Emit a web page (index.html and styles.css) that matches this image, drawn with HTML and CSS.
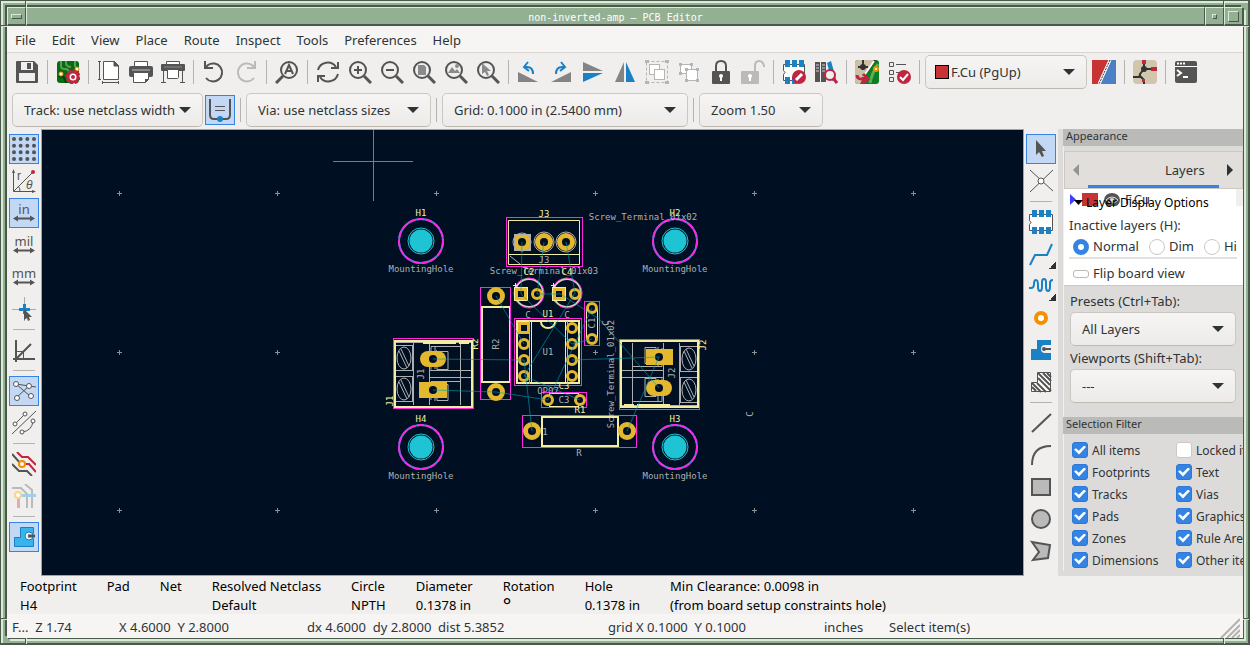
FILE: index.html
```html
<!DOCTYPE html>
<html lang="en">
<head>
  <meta charset="UTF-8" />
  <meta name="viewport" content="width=device-width, initial-scale=1.0"/>
  <title>non-inverted-amp – PCB Editor</title>
  <link rel="stylesheet" href="styles.css">
</head>
<body>
  <div class="frame">
    <i class="notch top left"></i><i class="notch top right"></i>
    <i class="notch bottom left"></i><i class="notch bottom right"></i>
    <i class="notch side top left"></i><i class="notch side top right"></i>
    <i class="notch side bottom left"></i><i class="notch side bottom right"></i>

    <div class="client">
      <header class="titlebar">
        <button class="wm-btn" aria-label="Window menu"><i class="wm-bar"></i></button>
        <h1 class="title">non-inverted-amp – PCB Editor</h1>
        <button class="wm-btn" aria-label="Minimize"><i class="wm-dot"></i></button>
        <button class="wm-btn" aria-label="Maximize"><i class="wm-box"></i></button>
      </header>

      <nav class="menubar">
        <button>File</button>
        <button>Edit</button>
        <button>View</button>
        <button>Place</button>
        <button>Route</button>
        <button>Inspect</button>
        <button>Tools</button>
        <button>Preferences</button>
        <button>Help</button>
      </nav>

      <div class="toolbar">
        <button class="tool" aria-label="Save"><svg viewBox="0 0 24 24"><path fill="#545454" d="M1 2a1 1 0 0 1 1-1h17l4 4v17a1 1 0 0 1-1 1H2a1 1 0 0 1-1-1z"/><path fill="#f0efee" d="M6 2h12v8H6zM4 13h16v8H4z"/><path fill="#545454" d="M12 3h4v6h-4z"/></svg></button>
        <i class="sep"></i>
        <button class="tool" aria-label="Board setup"><svg viewBox="0 0 24 24"><rect x="1" y="1" width="22" height="22" rx="3" fill="#0a6b12"/><path d="M5 1v5q0 3 4 3t4 4v3M10 1v3q1 3 5 3M19 1v6" stroke="#57a155" stroke-width="2" fill="none"/><path d="M3 17q5-3 7 6" stroke="#063f0a" stroke-width="2" fill="none"/><circle cx="5" cy="14" r="2" fill="#fff" stroke="#f29100"/><circle cx="21" cy="9" r="2" fill="#fff" stroke="#f29100"/><circle cx="17" cy="17" r="5" fill="#fff" stroke="#bf2641" stroke-width="3"/><circle cx="17" cy="17" r="6.500" fill="none" stroke="#bf2641" stroke-width="2" stroke-dasharray="3 2"/><circle cx="17" cy="17" r="2" fill="#bf2641"/></svg></button>
        <i class="sep"></i>
        <button class="tool" aria-label="Page settings"><svg viewBox="0 0 24 24" fill="none" stroke="#545454"><path d="M6.500 1.500h11l4 4v14h-15z" fill="#fff"/><path d="M17 1v5h5" fill="#545454"/><path d="M2.500 1v18M1 1.500h3M1 19.500h3M6 22.500h15M5.500 21v3M21.500 21v3"/></svg></button>
        <button class="tool" aria-label="Print"><svg viewBox="0 0 24 24"><path d="M5.500 7V1.500h13V7" fill="#fff" stroke="#545454"/><rect y="6" width="24" height="11" rx="2" fill="#545454"/><path fill="#8a8a8a" d="M3 9h18v2H3z"/><path d="M4.500 12.500h15v7l-3 3h-12z" fill="#fff" stroke="#545454"/><path fill="#545454" d="M16 19h4l-4 4z"/></svg></button>
        <button class="tool" aria-label="Plot"><svg viewBox="0 0 24 24"><path d="M5.500 5V1.500h13V5" fill="#fff" stroke="#545454"/><rect y="4" width="24" height="7" rx="1" fill="#545454"/><path d="M2.500 10v12M21.500 10v12M0 22.500h5M19 22.500h5" stroke="#545454"/><path d="M6.500 9.500h11v8l-1 1h-10z" fill="#fff" stroke="#545454"/><path d="M3 7h18" stroke="#8a8a8a"/></svg></button>
        <i class="sep"></i>
        <button class="tool" aria-label="Undo"><svg viewBox="0 0 24 24" fill="none" stroke="#545454" stroke-width="2"><path d="M3 1v7h8M3 8l3-3a9 9 0 1 1-2 13"/></svg></button>
        <button class="tool" aria-label="Redo"><svg viewBox="0 0 24 24" fill="none" stroke="#bababa" stroke-width="2"><path d="M21 1v7h-8M21 8l-3-3a9 9 0 1 0 2 13"/></svg></button>
        <i class="sep"></i>
        <button class="tool" aria-label="Find"><svg viewBox="0 0 24 24" fill="none" stroke="#545454" stroke-width="2"><circle cx="14" cy="10" r="8"/><path d="M8 16l-7 7" stroke-width="3"/><path d="M10 14l4-9 4 9M12 11h5"/></svg></button>
        <i class="sep"></i>
        <button class="tool" aria-label="Refresh"><svg viewBox="0 0 24 24" fill="none" stroke="#545454" stroke-width="2"><path d="M2 10a10 10 0 0 1 18-3M22 2v6h-7M22 14a10 10 0 0 1-18 3M2 22v-6h7"/></svg></button>
        <button class="tool" aria-label="Zoom in"><svg viewBox="0 0 24 24" fill="none" stroke="#545454" stroke-width="2"><circle cx="10" cy="10" r="8"/><path d="M16 16l7 7" stroke-width="3"/><path d="M10 6v8M6 10h8"/></svg></button>
        <button class="tool" aria-label="Zoom out"><svg viewBox="0 0 24 24" fill="none" stroke="#545454" stroke-width="2"><circle cx="10" cy="10" r="8"/><path d="M16 16l7 7" stroke-width="3"/><path d="M6 10h8"/></svg></button>
        <button class="tool" aria-label="Zoom to page"><svg viewBox="0 0 24 24" fill="none" stroke="#545454" stroke-width="2"><circle cx="10" cy="10" r="8"/><path d="M16 16l7 7" stroke-width="3"/><path fill="#8a8a8a" stroke="none" d="M6 5h6l2 2v8H6z"/></svg></button>
        <button class="tool" aria-label="Zoom to objects"><svg viewBox="0 0 24 24" fill="none" stroke="#545454" stroke-width="2"><circle cx="10" cy="10" r="8"/><path d="M16 16l7 7" stroke-width="3"/><path fill="#8a8a8a" stroke="none" d="M4 13l4-6 3 4 2-2 3 4z"/><circle cx="13" cy="6" r="1" fill="#8a8a8a" stroke="#8a8a8a"/></svg></button>
        <button class="tool" aria-label="Zoom to selection"><svg viewBox="0 0 24 24" fill="none" stroke="#545454" stroke-width="2"><circle cx="10" cy="10" r="8"/><path d="M16 16l7 7" stroke-width="3"/><path fill="#8a8a8a" stroke="none" d="M6 3v11l3-2 2 4 2-1-2-4h4z"/></svg></button>
        <i class="sep"></i>
        <button class="tool" aria-label="Rotate counterclockwise"><svg viewBox="0 0 24 24"><path fill="#848484" d="M1 12v10h20z"/><path d="M7 7h3q6 0 6 7M11 2L7 7l5 4" fill="none" stroke="#1a81c4" stroke-width="2"/></svg></button>
        <button class="tool" aria-label="Rotate clockwise"><svg viewBox="0 0 24 24"><path fill="#848484" d="M22 12v10H2z"/><path d="M16 7h-3q-6 0-6 7M12 2l4 5-5 4" fill="none" stroke="#1a81c4" stroke-width="2"/></svg></button>
        <button class="tool" aria-label="Mirror vertically"><svg viewBox="0 0 24 24"><path fill="#848484" d="M2 2v9h20z"/><path fill="#1a81c4" d="M2 22v-9h20z"/></svg></button>
        <button class="tool" aria-label="Mirror horizontally"><svg viewBox="0 0 24 24"><path fill="#848484" d="M2 22h9V2z"/><path fill="#1a81c4" d="M22 22h-9V2z"/></svg></button>
        <button class="tool" aria-label="Group"><svg viewBox="0 0 24 24" stroke="#b5b5b5" fill="none"><rect x="1.500" y="1.500" width="21" height="21" stroke-dasharray="3 2"/><path fill="#b5b5b5" stroke="none" d="M0 0h4v3H0zM20 0h4v3h-4zM0 21h4v3H0zM20 21h4v3h-4z"/><rect x="4.500" y="4.500" width="10" height="10" fill="#fff"/><rect x="9.500" y="9.500" width="10" height="10" fill="#fff"/></svg></button>
        <button class="tool" aria-label="Ungroup"><svg viewBox="0 0 24 24" stroke="#b5b5b5" fill="#fff"><rect x="3.500" y="4.500" width="11" height="9"/><rect x="9.500" y="9.500" width="11" height="11"/><path fill="#b5b5b5" stroke="none" d="M2 3h3v3H2zM13 3h3v3h-3zM2 12h3v3H2zM8 8h3v3H8zM19 8h3v3h-3zM8 19h3v3H8zM19 19h3v3h-3z"/></svg></button>
        <button class="tool" aria-label="Lock"><svg viewBox="0 0 24 24"><rect x="3" y="11" width="18" height="13" rx="1" fill="#545454"/><path d="M7 11V6q0-5 5-5t5 5v5" fill="none" stroke="#545454" stroke-width="2"/><circle cx="12" cy="16" r="2" fill="#fff"/><path fill="#fff" d="M11 16h2v5h-2z"/></svg></button>
        <button class="tool" aria-label="Unlock"><svg viewBox="0 0 24 24"><rect y="11" width="18" height="13" rx="1" fill="#bababa"/><path d="M14 11V6q0-5 4-5t5 5v1" fill="none" stroke="#bababa" stroke-width="2"/><circle cx="9" cy="16" r="2" fill="#fff"/><path fill="#fff" d="M8 16h2v5H8z"/></svg></button>
        <i class="sep"></i>
        <button class="tool" aria-label="Footprint editor"><svg viewBox="0 0 24 24"><path d="M1.500 4.500h21v16h-21v-6q3-2 0-4z" fill="#fff" stroke="#545454"/><path fill="#1a81c4" d="M3 0h5v7H3zM10 0h5v7h-5zM17 0h5v7h-5zM3 17h5v7H3zM10 17h5v7h-5z"/><circle cx="17" cy="17" r="7" fill="#bf2641"/><path d="M14 20l6-6" stroke="#fff" stroke-width="3"/></svg></button>
        <button class="tool" aria-label="Footprint library browser"><svg viewBox="0 0 24 24"><path fill="#545454" d="M1 2h5v20H1zM7 2h5v20H7z"/><path fill="#1a81c4" d="M13 3l4-2 5 18-4 2z"/><path d="M2 5h3M2 8h3M2 11h3M8 5h3M8 8h3M8 11h3" stroke="#d0d0d0"/><circle cx="16" cy="15" r="5" fill="#f0efee" stroke="#bf2641" stroke-width="2"/><path d="M19 18l4 5" stroke="#bf2641" stroke-width="3"/></svg></button>
        <i class="sep"></i>
        <button class="tool" aria-label="Update PCB"><svg viewBox="0 0 24 24"><rect width="24" height="24" rx="3" fill="#0b7d22"/><path fill="#cdc0a6" d="M3 0h16L5 24H3a3 3 0 0 1-3-3V3a3 3 0 0 1 3-3z"/><path d="M8 0v10M3 7h10M20 0L7 19" stroke="#333" stroke-width="2"/><path d="M19 1L8 17" stroke="#fff" stroke-width="2"/><circle cx="8" cy="7" r="3" fill="#333"/><path d="M23 4q-6 9-8 19" stroke="#59ae58" stroke-width="3" fill="none"/><circle cx="21" cy="9" r="2" fill="#fff" stroke="#f29100" stroke-width="2"/><path d="M2 15q0 5 8 4M8 14l5 5-6 4" stroke="#bf2641" stroke-width="3" fill="none"/></svg></button>
        <button class="tool" aria-label="Design rules checker"><svg viewBox="0 0 24 24"><path d="M2.500 2.500h4v4h-4zM2.500 10.500h4v4h-4zM2.500 17.500h4v4h-4zM9 4.500h10M9 12.500h6" fill="none" stroke="#545454"/><circle cx="17" cy="17" r="7" fill="#bf2641"/><path d="M13 17l3 3 5-6" fill="none" stroke="#fff" stroke-width="2"/></svg></button>
        <i class="sep"></i>
        <label class="combo layer"><i class="swatch"></i><select aria-label="Active layer"><option>F.Cu (PgUp)</option></select><i class="arrow"></i></label>
        <button class="tool" aria-label="Layer pair"><svg viewBox="0 0 24 24"><path fill="#c83434" d="M0 0h18L6 24H0z"/><path fill="#4d7fc4" d="M18 0h6v24H6z"/><path d="M18 0L7 24" stroke="#fff" stroke-width="3"/><path d="M18 0L7 24" stroke="#333" stroke-dasharray="2 1"/></svg></button>
        <i class="sep"></i>
        <button class="tool" aria-label="Switch to schematic"><svg viewBox="0 0 24 24"><rect width="24" height="24" rx="4" fill="#d1c5ac"/><path d="M11 3v6l-4 5v4M11 9h7M0 17h6M6 15l5 5v4" stroke="#333" stroke-width="2" fill="none"/><circle cx="11" cy="9" r="3" fill="#333"/><path fill="#bf2641" d="M9 0h4v4H9zM18 7h6v4h-6zM9 19h3v3H9z"/></svg></button>
        <i class="sep"></i>
        <button class="tool" aria-label="Scripting console"><svg viewBox="0 0 24 24"><rect x="1" y="1" width="22" height="22" rx="2" fill="#545454"/><path d="M1 6.500h22" stroke="#fff"/><path d="M3 3.500h8" stroke="#fff" stroke-width="2" stroke-dasharray="2 1"/><path d="M3 10l4 3-4 3M9 17h5" stroke="#fff" stroke-width="2" fill="none"/></svg></button>
      </div>

      <div class="toolbar options">
        <label class="combo track"><select aria-label="Track width"><option>Track: use netclass width</option></select><i class="arrow"></i></label>
        <button class="tool active" aria-label="Auto track width"><svg viewBox="0 0 24 24" fill="none" stroke="#545454" stroke-width="2"><path d="M2 1v16q0 4 4 4h12q4 0 4-4V1"/><path d="M7 8.500h10M7 12.500h10" stroke-width="1"/><circle cx="12" cy="21" r="3" fill="#1a81c4" stroke="none"/></svg></button>
        <i class="sep"></i>
        <label class="combo via"><select aria-label="Via size"><option>Via: use netclass sizes</option></select><i class="arrow"></i></label>
        <i class="sep"></i>
        <label class="combo grid-size"><select aria-label="Grid"><option>Grid: 0.1000 in (2.5400 mm)</option></select><i class="arrow"></i></label>
        <i class="sep"></i>
        <label class="combo zoom"><select aria-label="Zoom"><option>Zoom 1.50</option></select><i class="arrow"></i></label>
      </div>

      <main class="workspace">
        <div class="toolbar vertical">
          <button class="tool active" aria-label="Show grid"><svg viewBox="0 0 24 24" stroke="#545454" stroke-width="4" stroke-linecap="round" stroke-dasharray="0 6.667"><path d="M2 2h21M2 8.667h21M2 15.333h21M2 22h21"/></svg></button>
          <button class="tool" aria-label="Polar coordinates"><svg viewBox="0 0 24 24" fill="none" stroke="#545454"><path d="M1.500 2v20.500H22M2 22L21 3M8 22q0-3-2-5"/><path fill="#545454" stroke="none" d="M0 4l1.500-4L3 4zM20 21l4 1.500-4 1.500z"/><circle cx="21" cy="3" r="2" fill="#bf2641" stroke="none"/><text x="5" y="11" class="ico-text">r</text><text x="14" y="20" class="ico-text slant">θ</text></svg></button>
          <button class="tool active" aria-label="Inches"><svg viewBox="0 0 24 24"><text x="12" y="13" class="unit">in</text><path d="M5 17.500h14" stroke="#545454" stroke-width="2"/><path fill="#545454" d="M1 17.500l5-3v6zM23 17.500l-5-3v6z"/></svg></button>
          <button class="tool" aria-label="Mils"><svg viewBox="0 0 24 24"><text x="12" y="13" class="unit">mil</text><path d="M5 17.500h14" stroke="#545454" stroke-width="2"/><path fill="#545454" d="M1 17.500l5-3v6zM23 17.500l-5-3v6z"/></svg></button>
          <button class="tool" aria-label="Millimeters"><svg viewBox="0 0 24 24"><text x="12" y="13" class="unit">mm</text><path d="M5 17.500h14" stroke="#545454" stroke-width="2"/><path fill="#545454" d="M1 17.500l5-3v6zM23 17.500l-5-3v6z"/></svg></button>
          <button class="tool" aria-label="Full-window crosshair"><svg viewBox="0 0 24 24"><path d="M12.500 0v24M0 12.500h24" stroke="#aaa"/><path d="M12.500 7v10M7 12.500h11" stroke="#1a81c4" stroke-width="3"/><path fill="#545454" d="M12 12v11l3-2 1 3 2-1-1-3h3z"/></svg></button>
          <i class="sep"></i>
          <button class="tool" aria-label="Constrain to H, V, 45°"><svg viewBox="0 0 24 24" fill="none" stroke="#545454" stroke-width="2"><path d="M4 2v22M1 21h22M4 21L19 6"/><path d="M4 13.500h7.500V21" stroke-width="1"/></svg></button>
          <i class="sep"></i>
          <button class="tool active" aria-label="Show ratsnest"><svg viewBox="0 0 24 24" fill="#fff" stroke="#545454"><path d="M4 5l13 2 7 1M4 5l14 12M5 18L17 7"/><circle cx="4" cy="5" r="2.500"/><circle cx="17" cy="7" r="2.500"/><circle cx="5" cy="19" r="2.500"/><circle cx="19" cy="17" r="2.500"/></svg></button>
          <button class="tool" aria-label="Curved ratsnest"><svg viewBox="0 0 24 24" fill="none" stroke="#545454"><path d="M0 23L24 0M3 13L13 3M10 21q10-1 11-11"/><g fill="#fff"><circle cx="3" cy="13" r="2"/><circle cx="13" cy="3" r="2"/><circle cx="10" cy="21" r="2"/><circle cx="21" cy="10" r="2"/></g></svg></button>
          <i class="sep"></i>
          <button class="tool" aria-label="High contrast"><svg viewBox="0 0 24 24" fill="none" stroke-width="2"><path d="M0 2l9 10M0 12l7 7h8l5 5" stroke="#545454"/><path d="M5 0l5 5h6l8 8M14 12h3l7 8" stroke="#bf2641"/><circle cx="10" cy="12" r="3" fill="#fff" stroke="#f29100"/></svg></button>
          <button class="tool" aria-label="Net highlighting"><svg viewBox="0 0 24 24" fill="none" stroke-width="2"><path d="M0 4h9l6 6v14M13 0l7 6v18" stroke="#bababa"/><path d="M9 11.500h15" stroke="#a3cde8" stroke-width="3"/><path d="M6.500 13v11" stroke="#e8a8b3" stroke-width="3"/><circle cx="6" cy="11" r="3" fill="#fff" stroke="#fbd38f"/></svg></button>
          <i class="sep"></i>
          <button class="tool active" aria-label="Show filled zones"><svg viewBox="0 0 24 24"><path d="M8.500 2.500h13v6h-4v5h4v8h-19v-9h6z" fill="#39b4ea" stroke="#1a81c4"/><circle cx="17" cy="11" r="4" fill="#e8f2fb" stroke="#1a81c4"/><path d="M16 11h7" stroke="#545454" stroke-width="3"/></svg></button>
        </div>

        <div class="canvas">
          <svg class="board" role="img" aria-label="Board">
            <defs>
              <g id="cross"><path d="M-2 .5h5M.5-2v5" stroke="#8b9096"/></g>
              <g id="hole">
                <circle r="22" stroke="#4d7fe0" fill="none" stroke-width="2"/>
                <circle r="22" stroke="#ff26e2" fill="none" stroke-width="2" stroke-dasharray="7 2"/>
                <circle r="13" stroke="#1ec3d4" fill="none"/>
                <circle r="11.500" fill="#1ec3d4"/>
              </g>
              <g id="pad"><circle r="4.500" fill="#001022" stroke="#e3b72e" stroke-width="3"/></g>
              <g id="sqpad"><rect x="-4.500" y="-4.500" width="9" height="9" fill="#001022" stroke="#e3b72e" stroke-width="3"/></g>
              <g id="bigpad"><circle r="6.500" fill="#001022" stroke="#e3b72e" stroke-width="5"/></g>
              <g id="screw" class="fab"><rect x="-8.500" y="-12.500" width="17" height="25"/><ellipse rx="7" ry="11"/><path d="M-3-9L5 8M-5-7L3 10"/></g>
              <g id="terminal">
                <g class="fab"><path d="M3 5.500h77M20.500 5v63M36.500 5v63M67.500 5v63M36 33.500h44M36 40.500h44"/><path d="M38 32.500V9.500h29M44 32.500v-18h11v18zM38 63V44.500h29M44 63.500v-16h11v16zM42 9v23M42 44v20"/></g>
                <use href="#screw" x="11" y="21"/><use href="#screw" x="11" y="52"/>
                <path class="silk bold" d="M2 4h77v66H2zM31 4v2h31V4M66 6h10"/>
                <rect class="court" x=".5" y="1.500" width="80" height="70"/>
              </g>
            </defs>
            <g transform="translate(-42 -130)">
              <use href="#cross" x="119" y="193"/><use href="#cross" x="277" y="193"/><use href="#cross" x="436" y="193"/><use href="#cross" x="595" y="193"/><use href="#cross" x="754" y="193"/><use href="#cross" x="913" y="193"/>
              <use href="#cross" x="119" y="352"/><use href="#cross" x="277" y="352"/><use href="#cross" x="436" y="352"/><use href="#cross" x="595" y="352"/><use href="#cross" x="754" y="352"/><use href="#cross" x="913" y="352"/>
              <use href="#cross" x="119" y="510"/><use href="#cross" x="277" y="510"/><use href="#cross" x="436" y="510"/><use href="#cross" x="595" y="510"/><use href="#cross" x="754" y="510"/><use href="#cross" x="913" y="510"/>
              <path d="M333 161.500h80M373.500 130v71" stroke="#6f7f90"/>

              <!-- mounting holes -->
              <use href="#hole" x="421" y="241"/><use href="#hole" x="675" y="241"/>
              <use href="#hole" x="421" y="447"/><use href="#hole" x="675" y="447"/>
              <g class="val"><text x="421" y="272">MountingHole</text><text x="675" y="272">MountingHole</text><text x="421" y="479">MountingHole</text><text x="675" y="479">MountingHole</text></g>
              <g class="ref"><text x="421" y="216">H1</text><text x="675" y="216">H2</text><text x="421" y="422">H4</text><text x="675" y="422">H3</text></g>

              <!-- J3 -->
              <rect class="court" x="506.500" y="217.500" width="76" height="49"/>
              <path class="silk" d="M508.500 220.500h71v44h-71zM508 254.500h72"/>
              <path class="fab" d="M510 256l10 8"/>
              <path fill="#e3b72e" d="M514 234h17v17h-17z"/><circle cx="522" cy="242" r="9" class="fab"/><rect x="514.500" y="234.500" width="16" height="16" class="fab"/><circle cx="522" cy="242" r="4" fill="#001022"/>
              <use href="#bigpad" x="544" y="242"/><use href="#bigpad" x="566" y="242"/>
              <circle cx="544" cy="242" r="10" class="fab"/><circle cx="566" cy="242" r="10" class="fab"/>

              <!-- electrolytic capacitors -->
              <g id="elco"><circle cx="529" cy="293" r="14" stroke="#d0cdbd" fill="none" stroke-width="2"/><circle cx="529" cy="293" r="15" stroke="#ff26e2" fill="none" stroke-dasharray="14 3"/><use href="#sqpad" x="521" y="294"/><rect class="silk" x="514.500" y="287.500" width="13" height="13"/><use href="#pad" x="537" y="294"/><path class="silk" d="M513 285.500h5M515.500 283v5"/></g>
              <use href="#elco" x="38"/>

              <!-- R2 -->
              <rect class="silk bold" x="482" y="307" width="28" height="75"/>
              <rect class="court" x="480.500" y="287.500" width="30" height="112"/>
              <use href="#bigpad" x="496" y="296"/><use href="#bigpad" x="496" y="392"/>

              <!-- U1 -->
              <path class="silk bold" d="M517 321h62v62h-62zM541 322a7 6 0 0 0 14 0"/>
              <path class="silk" d="M531.500 321v63M565.500 321v63"/>
              <path class="fab" d="M529.500 321v63M567.500 321v63"/>
              <rect class="court" x="514.500" y="318.500" width="67" height="67"/>
              <use href="#sqpad" x="524" y="328"/><use href="#pad" x="524" y="344"/><use href="#pad" x="524" y="360"/><use href="#pad" x="524" y="376"/>
              <use href="#pad" x="572" y="328"/><use href="#pad" x="572" y="344"/><use href="#pad" x="572" y="360"/><use href="#pad" x="572" y="376"/>

              <!-- C1, C3 -->
              <rect class="court" x="584.500" y="301.500" width="15" height="44"/>
              <rect class="silk" x="586.500" y="309.500" width="11" height="28"/>
              <use href="#pad" x="592" y="308"/><use href="#pad" x="592" y="339"/>
              <rect class="court" x="541.500" y="392.500" width="45" height="15"/>
              <rect class="silk" x="549.500" y="393.500" width="29" height="13"/>
              <use href="#pad" x="548" y="400"/><use href="#pad" x="580" y="400"/>

              <!-- R1 -->
              <rect class="court" x="522.500" y="415.500" width="114" height="32"/>
              <rect class="silk bold" x="542" y="417" width="76" height="29"/>
              <use href="#bigpad" x="532" y="431"/><use href="#bigpad" x="627" y="431"/>

              <!-- J1, J2 -->
              <use href="#terminal" x="393" y="337"/>
              <use href="#terminal" transform="translate(700 411) rotate(180)"/>
              <rect x="420" y="351" width="26" height="16" rx="8" fill="#e3b72e"/><rect x="419" y="382" width="28" height="16" fill="#e3b72e"/>
              <rect x="646" y="349" width="27" height="16" fill="#e3b72e"/><rect x="646" y="380" width="26" height="16" rx="8" fill="#e3b72e"/>
              <g fill="#001022"><circle cx="433" cy="359" r="4"/><circle cx="433" cy="390" r="4"/><circle cx="659" cy="357" r="4"/><circle cx="659" cy="388" r="4"/></g>

              <!-- ratsnest -->
              <path class="rats" d="M522 242l-1 52M544 242l-7 52M566 242l9 51M537 294h22M521 294l51 50M496 296l28 48M575 293l-51 83M433 359l91 1M433 390l63 2 52 8M524 360l8 71M524 376l56 24M572 360l87-3M559 293l40 26 60 69M592 308l-44 92M659 357l-32 74M592 339l-20 5"/>

              <g class="val">
                <text x="544" y="263">J3</text><text x="643" y="220">Screw_Terminal_01x02</text><text x="544" y="274">Screw_Terminal_01x03</text>
                <text x="528" y="318">C</text><text x="567" y="318">C</text><text x="548" y="355">U1</text><text x="548" y="394">OP07</text>
                <text x="564" y="403">C3</text><text x="545" y="435">1</text><text x="579" y="456">R</text>
                <text transform="translate(499 344) rotate(-90)">R2</text><text transform="translate(595 323) rotate(-90)">C1</text>
                <text transform="translate(609 323) rotate(-90)">C</text><text transform="translate(614 374) rotate(-90)">Screw_Terminal_01x02</text>
                <text transform="translate(424 374) rotate(-90)">J1</text><text transform="translate(675 373) rotate(-90)">J2</text>
                <text transform="translate(753 414) rotate(-90)">C</text>
              </g>
              <g class="ref">
                <text x="544" y="217">J3</text><text x="529" y="275">C2</text><text x="567" y="275">C4</text><text x="548" y="317">U1</text>
                <text x="564" y="389">C3</text><text x="580" y="413">R1</text>
                <text transform="translate(478 344) rotate(-90)">R2</text><text transform="translate(393 401) rotate(-90)">J1</text><text transform="translate(706 345) rotate(-90)">J2</text>
              </g>
            </g>
          </svg>
        </div>

        <div class="toolbar vertical right-tools">
          <button class="tool active" aria-label="Select"><svg viewBox="0 0 24 24"><path fill="#545454" d="M7 3v15l3-3 3 5 2-1-2-5h4z"/></svg></button>
          <button class="tool" aria-label="Local ratsnest"><svg viewBox="0 0 24 24" fill="none" stroke="#545454"><path d="M1 1l23 21M24 1L1 23"/><circle cx="12" cy="12" r="3" fill="#fff"/></svg></button>
          <i class="sep"></i>
          <button class="tool" aria-label="Place footprint"><svg viewBox="0 0 24 24"><path d="M.5 4.500h23v16H.5v-6q3-2 0-4z" fill="#fff" stroke="#545454"/><path fill="#1a81c4" d="M3 0h5v7H3zM10 0h5v7h-5zM17 0h5v7h-5zM3 17h5v7H3zM10 17h5v7h-5zM17 17h5v7h-5z"/></svg></button>
          <button class="tool more" aria-label="Route track"><svg viewBox="0 0 24 24" fill="none" stroke="#1a81c4" stroke-width="2"><path d="M1 23l5-10h12l5-11"/></svg></button>
          <button class="tool more" aria-label="Tune length"><svg viewBox="0 0 24 24" fill="none" stroke="#1a81c4" stroke-width="2"><path d="M0 14h2q3 0 3-4t2-4 2 5v2q0 4 2 4t2-4V8q0-3 2-3t2 3v5q0 4 2 4t2-4V9q0-3 3-3"/></svg></button>
          <button class="tool" aria-label="Add via"><svg viewBox="0 0 24 24"><circle cx="12" cy="12" r="5" fill="#fff" stroke="#f29100" stroke-width="4"/></svg></button>
          <button class="tool" aria-label="Add zone"><svg viewBox="0 0 24 24"><path d="M8 2h14v20H2V11h6z" fill="#1a81c4"/><path d="M22 7h-6a4 4 0 0 0 0 8h6" fill="#f0efee"/><path d="M14 11h8" stroke="#545454" stroke-width="2"/><circle cx="15" cy="11" r="2" fill="#545454"/></svg></button>
          <button class="tool" aria-label="Add rule area"><svg viewBox="0 0 24 24" fill="none" stroke="#545454"><path d="M8.500 2.500h13v19h-19v-9h6z" fill="#fff"/><path d="M9 3l12 12M14 3l8 8M18 3l4 4M9 8l13 13M3 13l9 9M8 13l9 9M3 17l4 4" stroke-width="2"/></svg></button>
          <i class="sep"></i>
          <button class="tool" aria-label="Draw line"><svg viewBox="0 0 24 24" fill="none" stroke="#545454" stroke-width="2"><path d="M3 21L22 3"/></svg></button>
          <button class="tool" aria-label="Draw arc"><svg viewBox="0 0 24 24" fill="none" stroke="#545454" stroke-width="2"><path d="M3 22Q3 3 22 3"/></svg></button>
          <button class="tool" aria-label="Draw rectangle"><svg viewBox="0 0 24 24" fill="#bababa" stroke="#545454" stroke-width="2"><path d="M3 4h18v16H3z"/></svg></button>
          <button class="tool" aria-label="Draw circle"><svg viewBox="0 0 24 24" fill="#bababa" stroke="#545454" stroke-width="2"><circle cx="12" cy="12" r="9"/></svg></button>
          <button class="tool" aria-label="Draw polygon"><svg viewBox="0 0 24 24" fill="#bababa" stroke="#545454" stroke-width="2"><path d="M3 3l18 3-2 13-15 2 6-8z"/></svg></button>
        </div>

        <aside class="side">
          <h2 class="side-title">Appearance</h2>
          <section class="appearance">
            <div class="tabs">
              <button class="scroll prev" aria-label="Previous tab"></button>
              <button class="tab">Layers</button>
              <button class="scroll next" aria-label="Next tab"></button>
            </div>
            <div class="layers">
              <div class="layer-row"><i class="pointer"></i><i class="layer-color"></i><svg class="eye" viewBox="0 0 16 14"><ellipse cx="8" cy="7" rx="8" ry="7" fill="#545454"/><path d="M2 7q6-6 12 0-6 6-12 0z" fill="none" stroke="#ddd"/><circle cx="8" cy="7" r="2" fill="#ddd"/></svg><span>F.Cu</span></div>
              <button class="disclosure"><i class="fold"></i>Layer Display Options</button>
              <p class="caption">Inactive layers (H):</p>
              <div class="radios">
                <label><input type="radio" name="inactive" checked>Normal</label>
                <label><input type="radio" name="inactive">Dim</label>
                <label><input type="radio" name="inactive">Hide</label>
              </div>
              <label class="flip"><input type="checkbox">Flip board view</label>
            </div>
            <label class="field" for="presets">Presets (Ctrl+Tab):</label>
            <div class="combo"><select id="presets"><option>All Layers</option></select><i class="arrow"></i></div>
            <label class="field" for="viewports">Viewports (Shift+Tab):</label>
            <div class="combo"><select id="viewports"><option>---</option></select><i class="arrow"></i></div>
          </section>
          <h2 class="side-title">Selection Filter</h2>
          <section class="filter">
            <label><input type="checkbox" checked>All items</label>
            <label><input type="checkbox">Locked items</label>
            <label><input type="checkbox" checked>Footprints</label>
            <label><input type="checkbox" checked>Text</label>
            <label><input type="checkbox" checked>Tracks</label>
            <label><input type="checkbox" checked>Vias</label>
            <label><input type="checkbox" checked>Pads</label>
            <label><input type="checkbox" checked>Graphics</label>
            <label><input type="checkbox" checked>Zones</label>
            <label><input type="checkbox" checked>Rule Areas</label>
            <label><input type="checkbox" checked>Dimensions</label>
            <label><input type="checkbox" checked>Other items</label>
          </section>
        </aside>
      </main>

      <dl class="info">
        <div><dt>Footprint</dt><dd>H4</dd></div>
        <div><dt>Pad</dt><dd></dd></div>
        <div><dt>Net</dt><dd></dd></div>
        <div><dt>Resolved Netclass</dt><dd>Default</dd></div>
        <div><dt>Circle</dt><dd>NPTH</dd></div>
        <div><dt>Diameter</dt><dd>0.1378 in</dd></div>
        <div><dt>Rotation</dt><dd class="degree">°</dd></div>
        <div><dt>Hole</dt><dd>0.1378 in</dd></div>
        <div><dt>Min Clearance: 0.0098 in</dt><dd>(from board setup constraints hole)</dd></div>
      </dl>

      <footer class="status">
        <span>F...  Z 1.74</span>
        <span>X 4.6000  Y 2.8000</span>
        <span>dx 4.6000  dy 2.8000  dist 5.3852</span>
        <span>grid X 0.1000  Y 0.1000</span>
        <span>inches</span>
        <span>Select item(s)</span>
        <svg class="grip" viewBox="0 0 20 20" stroke="#b5b2ad" stroke-width="2"><path d="M1 20L20 1M7 20L20 7M12 20l8-8M17 20l3-3"/></svg>
      </footer>
    </div>
  </div>
</body>
</html>
```
FILE: styles.css
```css
:root {
  --frame: #93b093;
  --frame-light: #dceadc;
  --frame-dark: #4a5a4a;
  --bg: #f0efee;
  --bg-light: #f6f5f4;
  --panel: #dddbda;
  --border: #cdc7c2;
  --text: #2e3436;
  --accent: #3584e4;
  --board: #001022;
  --silk: #f2eda1;
}

* {
  box-sizing: border-box;
}

body {
  margin: 0;
  font-family: "Noto Sans", sans-serif;
  font-size: 13px;
  line-height: 19px;
  color: var(--text);
}

button, select, input {
  font: inherit;
  color: inherit;
  margin: 0;
}

button {
  border: none;
  background: none;
  padding: 0;
}

/* window frame */
.frame {
  position: relative;
  height: 100vh;
  padding: 7px;
  background: var(--frame);
  box-shadow: inset 1px 1px 0 var(--frame-dark), inset -2px -2px 0 var(--frame-dark), inset 3px 3px 0 var(--frame-light);
}

.client {
  display: flex;
  flex-direction: column;
  height: 100%;
  background: var(--bg);
  box-shadow: -2px -2px 0 var(--frame-dark), 1px 1px 0 var(--frame-dark), 3px 3px 0 var(--frame-light);
}

.notch {
  position: absolute;
  width: 2px;
  height: 6px;
  border-left: 1px solid var(--frame-dark);
  background: var(--frame-light);
}

.notch.top { top: 1px; }
.notch.bottom { bottom: 1px; }
.notch.left { left: 25px; }
.notch.right { right: 25px; }

.notch.side {
  width: 6px;
  height: 2px;
  border-left: none;
  border-top: 1px solid var(--frame-dark);
}

.notch.side.top { top: 25px; }
.notch.side.bottom { bottom: 25px; }
.notch.side.left { left: 1px; }
.notch.side.right { right: 1px; }

.titlebar {
  display: flex;
  flex: none;
  height: 19px;
  background: var(--frame);
}

.wm-btn, .title {
  border: 1px solid;
  border-width: 1px 1px 2px 1px;
  border-color: var(--frame-light) var(--frame-dark) var(--frame-dark) var(--frame-light);
}

.wm-btn {
  display: grid;
  place-items: center;
  width: 19px;
}

.wm-btn i {
  border: 1px solid;
  border-color: var(--frame-light) var(--frame-dark) var(--frame-dark) var(--frame-light);
}

.wm-bar { width: 11px; height: 5px; }
.wm-dot { width: 5px; height: 5px; }
.wm-box { width: 11px; height: 11px; }

.title {
  flex: 1;
  margin: 0;
  font: 10px/19px "DejaVu Sans Mono", monospace;
  color: #fff;
  text-align: center;
}

/* menus and toolbars */
.menubar {
  display: flex;
  flex: none;
  height: 27px;
  background: var(--bg-light);
  border-bottom: 1px solid #d8d5d2;
}

.menubar button {
  padding: 2px 8px 0;
}

.toolbar {
  display: flex;
  flex: none;
  align-items: center;
  height: 38px;
  padding-left: 4px;
}

.tool {
  display: grid;
  place-items: center;
  flex: none;
  width: 30px;
  height: 30px;
  margin: 1px;
}

.tool svg {
  width: 24px;
  height: 24px;
}

.tool.active {
  background: #c2d8f5;
  border: 1px solid var(--accent);
}

.sep {
  flex: none;
  width: 1px;
  height: 24px;
  margin: 0 4px;
  background: #b5b3b1;
}

.combo {
  display: flex;
  align-items: center;
  height: 34px;
  padding: 0 11px;
  border: 1px solid var(--border);
  border-bottom-color: #bfb8b1;
  border-radius: 5px;
  background: linear-gradient(#f6f5f4, #edebe9);
}

.combo select {
  flex: 1;
  min-width: 0;
  padding: 0;
  border: none;
  background: none;
  appearance: none;
}

.arrow {
  width: 12px;
  height: 6px;
  background: var(--text);
  clip-path: polygon(0 0, 100% 0, 50% 100%);
}

.options { padding-left: 5px; }
.layer { width: 162px; margin: 0 1px; padding-left: 9px; }
.track { width: 191px; margin-right: 1px; }
.via { width: 185px; margin: 0 1px; }
.grid-size { width: 246px; margin: 0 1px; }
.zoom { width: 124px; margin: 0 1px; }

.swatch {
  width: 14px;
  height: 14px;
  margin-right: 2px;
  background: #c83434;
  border: 1px solid #000;
}

.workspace {
  display: flex;
  flex: 1;
  min-height: 0;
}

.vertical {
  flex-direction: column;
  width: 34px;
  height: auto;
  padding: 4px 0 0;
  overflow: hidden;
}

.vertical .sep {
  width: 22px;
  height: 1px;
  margin: 4px 0;
}

.more {
  background: linear-gradient(135deg, transparent 50%, var(--text) 50%) right bottom / 7px 7px no-repeat;
}

.ico-text {
  font: 12px "Liberation Sans", sans-serif;
  fill: #545454;
  stroke: none;
}

.slant { font-style: italic; }

.unit {
  font: 13px "Noto Sans", sans-serif;
  fill: #545454;
  text-anchor: middle;
}

/* board canvas */
.canvas {
  flex: 1;
  min-width: 0;
  background: var(--board);
  border: 1px solid #a3a3a3;
}

.board {
  display: block;
  width: 100%;
  height: 100%;
}

.court { fill: none; stroke: #ff26e2; }
.silk { fill: none; stroke: var(--silk); }
.bold { stroke-width: 2; }
.fab { fill: none; stroke: #afafaf; }
.rats { fill: none; stroke: #00a0b0; stroke-opacity: 0.6; }

.val, .ref {
  font: 9px "DejaVu Sans Mono", monospace;
  text-anchor: middle;
  fill: #afafaf;
}

.ref { fill: var(--silk); }

/* side panel */
.side {
  display: flex;
  flex-direction: column;
  width: 185px;
  padding-left: 5px;
  background: var(--panel);
  overflow: hidden;
}

.side-title {
  flex: none;
  margin: 0;
  padding-left: 3px;
  font-size: 11px;
  font-weight: normal;
  line-height: 14px;
  height: 17px;
  background: #babab9;
}

.appearance {
  padding: 5px 7px 14px 6px;
  border-left: 1px solid var(--bg);
}

.tabs {
  display: flex;
  align-items: center;
  height: 38px;
  margin: 0 -7px 0 -6px;
  padding: 0 9px 0 8px;
  background: #e1dedb;
  border: 1px solid var(--border);
}

.tab {
  flex: 1;
  height: 100%;
  margin: 0 8px 0 9px;
  padding: 3px 0 0 77px;
  text-align: left;
  border-bottom: 3px solid var(--accent);
}

.scroll {
  width: 6px;
  height: 12px;
  background: #929595;
  clip-path: polygon(100% 0, 100% 100%, 0 50%);
}

.scroll.next {
  background: var(--text);
  clip-path: polygon(0 0, 100% 50%, 0 100%);
}

.layers {
  position: relative;
  height: 97px;
  margin: 0 -7px 0 -6px;
  padding: 4px 5px 0;
  background: #fff;
  border-bottom: 1px solid var(--border);
}

/* first layer row is overlapped by the options pane */
.layer-row {
  position: absolute;
  top: 0;
  left: 6px;
  right: 0;
  display: flex;
  align-items: center;
  height: 17px;
  padding-top: 4px;
  border-right: 7px solid var(--bg);
  overflow: hidden;
}

.pointer {
  width: 6px;
  height: 11px;
  background: #3f3fff;
  clip-path: polygon(0 0, 100% 50%, 0 100%);
}

.layer-color {
  width: 16px;
  height: 14px;
  margin: 0 6px;
  background: #c83434;
}

.eye {
  width: 16px;
  height: 14px;
  margin-right: 5px;
}

.disclosure {
  position: relative;
  display: flex;
  align-items: center;
  gap: 3px;
  padding-left: 5px;
  font-size: 12px;
  color: #000;
  white-space: nowrap;
}

.fold {
  width: 9px;
  height: 5px;
  background: #000;
  clip-path: polygon(0 0, 100% 0, 50% 100%);
}

.caption {
  margin: 4px 0 2px;
}

.radios {
  display: flex;
  gap: 10px;
  padding: 0 0 1px 4px;
  margin-right: 1px;
  border-bottom: 2px solid #e2e1df;
  overflow: hidden;
}

.radios label, .flip, .filter label {
  display: flex;
  align-items: center;
  gap: 4px;
  white-space: nowrap;
}

.radios input {
  appearance: none;
  flex: none;
  width: 16px;
  height: 16px;
  border: 1px solid var(--border);
  border-radius: 50%;
  background: #fff;
}

.radios input:checked {
  border: 5px solid var(--accent);
}

.flip {
  padding: 5px 0 0 4px;
}

.flip input {
  appearance: none;
  width: 16px;
  height: 8px;
  border: 1px solid #bdb7b1;
  border-radius: 3px;
}

.field {
  display: block;
  padding: 5px 0 1px;
  line-height: 20px;
}

.appearance .combo {
  width: 166px;
}

.appearance .combo + .field {
  padding-top: 2px;
}

.filter {
  display: grid;
  grid-template-columns: 104px 104px;
  grid-auto-rows: 22px;
  padding: 5px 0 0 8px;
  border-left: 1px solid var(--bg);
  font-size: 12px;
}

.filter input {
  appearance: none;
  flex: none;
  display: grid;
  place-items: center;
  width: 16px;
  height: 16px;
  border: 1px solid var(--border);
  border-radius: 3px;
  background: #fff;
}

.filter input:checked {
  background: var(--accent);
  border-color: #2b78d8;
}

.filter input:checked::before {
  content: "";
  width: 12px;
  height: 9px;
  background: #fff;
  clip-path: polygon(0 45%, 17% 30%, 40% 58%, 84% 0, 100% 18%, 42% 100%);
}

/* message panel and status bar */
.info {
  display: flex;
  flex: none;
  gap: 30px;
  height: 38px;
  margin: 0;
  padding: 1px 0 0 13px;
  color: #000;
}

.info dt, .info dd {
  margin: 0;
  height: 19px;
  white-space: nowrap;
}

.degree {
  font-size: 20px;
}

.status {
  display: grid;
  grid-template-columns: 107px 188px 301px 216px 65px 1fr 20px;
  flex: none;
  height: 24px;
  padding: 4px 3px 0 5px;
  background: var(--bg-light);
  white-space: pre;
}

.grip {
  width: 20px;
  height: 20px;
}
```
